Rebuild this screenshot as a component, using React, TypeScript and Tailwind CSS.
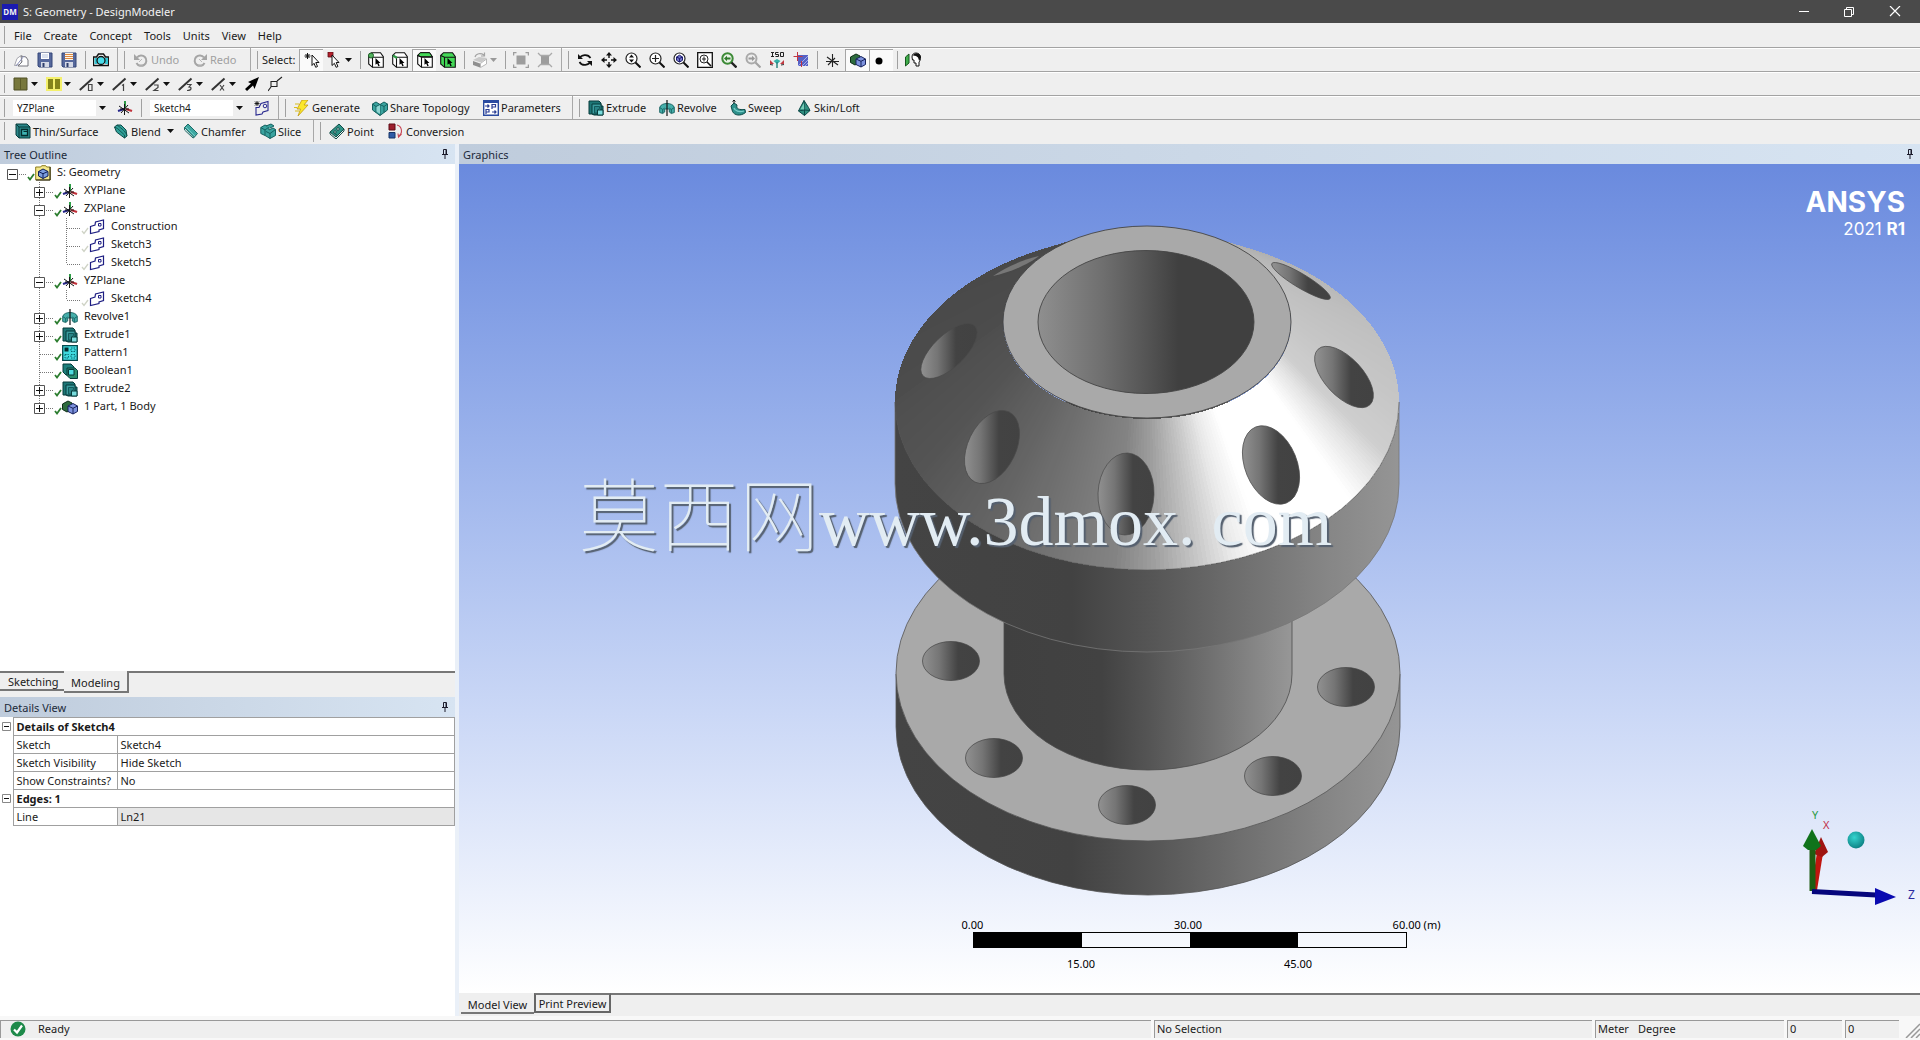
import React from "react";

type Kids = { children?: React.ReactNode };

/* ---------- icons ---------- */

function Ico({ children, size = 16 }: Kids & { size?: number }) {
  return (
    <svg width={size} height={size} viewBox="0 0 16 16" className="shrink-0" fill="none" aria-hidden="true">
      {children}
    </svg>
  );
}

const TEAL = "#3aa39f";
const DTEAL = "#14605f";

const icons: Record<string, React.ReactNode> = {
  sketchNew: (
    <Ico>
      <path d="M1.500 13.500l2.500-7 4-3 3 2-4 7z" fill="#fff" stroke="#a5a5ad" />
      <path d="M8 4l5 1 2 3v6H5l4-4z" fill="#fdfdfd" stroke="#77777f" />
      <path d="M3 14L11 4" stroke="#8a90b8" />
    </Ico>
  ),
  save: (
    <Ico>
      <path d="M1 1h14v14H2l-1-1z" fill="#56689c" stroke="#344679" />
      <path d="M4 1h8v6H4z" fill="#fff" />
      <path d="M4 10h8v5H4z" fill="#d5d9e6" />
      <path d="M5.500 11h2v4h-2z" fill="#2e3e6d" />
      <path d="M5 3h6M5 5h6" stroke="#b7c4df" />
    </Ico>
  ),
  saveAs: (
    <Ico>
      <path d="M1 1h14v14H2l-1-1z" fill="#56689c" stroke="#344679" />
      <path d="M4 1h8v7H4z" fill="#fff6e6" />
      <path d="M4 10h8v5H4z" fill="#d5d9e6" />
      <path d="M5.500 11h2v4h-2z" fill="#2e3e6d" />
      <path d="M4 2.500h8M4 4.500h8M4 6.500h8" stroke="#dc8740" />
    </Ico>
  ),
  camera: (
    <Ico>
      <path d="M.5 5h3l2-3h5l2 3h3v8.500H.5z" fill="#fff" stroke="#111" strokeWidth="1.400" />
      <path d="M1.500 6h3v6h-3zM12 6h3v6h-3z" fill="#34c5d4" />
      <circle cx="8" cy="8.500" r="4" fill="#4adbe8" stroke="#111" strokeWidth="1.300" />
    </Ico>
  ),
  undo: (
    <Ico>
      <path d="M4 5.500a5.200 5.200 0 1 1-.5 5.500" stroke="#a5a5a5" strokeWidth="2" />
      <path d="M1 2v6h6z" fill="#a5a5a5" />
      <path d="M6 13h4M6 10l3-3" stroke="#b9b9b9" />
    </Ico>
  ),
  redo: (
    <Ico>
      <path d="M12 5.500a5.200 5.200 0 1 0 .5 5.500" stroke="#a5a5a5" strokeWidth="2" />
      <path d="M15 2v6H9z" fill="#a5a5a5" />
      <path d="M6 13h4M10 10L7 7" stroke="#b9b9b9" />
    </Ico>
  ),
  newSel: (
    <Ico>
      <path d="M3.500 1v6M.5 4h6M1.500 2l4 4M5.500 2l-4 4" stroke="#111" />
      <path d="M8 3l7 7.500h-3.200l1.700 4-1.800.8-1.700-4L8 13.500z" fill="#fff" stroke="#111" />
    </Ico>
  ),
  selMode: (
    <Ico>
      <path d="M1 0h5v5H1z" fill="#b5202c" stroke="#5c0d14" strokeWidth=".8" />
      <path d="M5 3l7 7.500H9.200l1.700 4-1.800.8-1.700-4L5 13.500z" fill="#fff" stroke="#111" />
    </Ico>
  ),
  isoBox: (
    <Ico>
      <path d="M1 9l7 2.500v4L1 13z" fill="#8f8f8f" />
      <path d="M1 8l6-3 8 1-6 4.500z" fill="#c9c9c9" />
      <path d="M8.500 11.500l6-4.500v5l-6 3.500z" fill="#fff" stroke="#a7a7a7" strokeWidth=".8" />
      <path d="M3 5c1-4 6-4 9-2M12.500.5V4H9" stroke="#a3a3a3" strokeWidth="1.200" />
    </Ico>
  ),
  grayBox1: (
    <Ico>
      <path d="M3.500 3.500h9v9h-9z" fill="#9d9d9d" />
      <path d="M.5 3.500v-3h3M12.500.5h3v3M15.500 12.500v3h-3M3.500 15.500h-3v-3" stroke="#9d9d9d" strokeWidth="1.500" />
    </Ico>
  ),
  grayBox2: (
    <Ico>
      <path d="M4 4h8v8H4z" fill="#9d9d9d" />
      <path d="M1 1l3 3M15 1l-3 3M1 15l3-3M15 15l-3-3M4 3.500h8M4 12.500h8" stroke="#aaa" strokeWidth="1.300" />
    </Ico>
  ),
  rotate: (
    <Ico>
      <path d="M2.500 6.500C4 2.500 11 1.500 13.500 6M13.500 9.500C12 13.500 5 14.500 2.500 10" stroke="#111" strokeWidth="1.700" />
      <path d="M1 2v5h5zM15 14V9h-5z" fill="#111" />
    </Ico>
  ),
  pan: (
    <Ico>
      <path d="M8 2v4M8 10v4M2 8h4M10 8h4" stroke="#111" strokeWidth="1.400" />
      <path d="M8 0l3 3.500H5zM8 16l3-3.500H5zM0 8l3.500-3v6zM16 8l-3.500-3v6z" fill="#111" />
    </Ico>
  ),
  zoomUD: (
    <Ico>
      <circle cx="6.500" cy="6.500" r="5.500" fill="#fff" stroke="#222" strokeWidth="1.200" />
      <path d="M10.500 10.500l5 5" stroke="#111" strokeWidth="2" />
      <path d="M6.500 2.500l2.500 3H4zM6.500 10.500L9 7.500H4z" fill="#111" />
    </Ico>
  ),
  zoomPlus: (
    <Ico>
      <circle cx="6.500" cy="6.500" r="5.500" fill="#fff" stroke="#222" strokeWidth="1.200" />
      <path d="M10.500 10.500l5 5" stroke="#111" strokeWidth="2" />
      <path d="M6.500 3v7M3 6.500h7" stroke="#222" strokeWidth="1.200" />
    </Ico>
  ),
  zoomFit: (
    <Ico>
      <circle cx="6.500" cy="6.500" r="5.500" fill="#fff" stroke="#222" strokeWidth="1.200" />
      <path d="M10.500 10.500l5 5" stroke="#111" strokeWidth="2" />
      <path d="M3.500 5l3-1.800 3 1.800v3.300l-3 1.800-3-1.800z" fill="#7174c9" stroke="#1c1c70" />
      <path d="M3.500 5l3 1.500 3-1.500M6.500 6.500v3.600" stroke="#1c1c70" />
    </Ico>
  ),
  zoomWin: (
    <Ico>
      <path d="M.7.7h14.600v14.600H.7z" fill="#fff" stroke="#111" strokeWidth="1.300" />
      <circle cx="7" cy="7" r="4" stroke="#222" />
      <path d="M10 10l4 4" stroke="#111" strokeWidth="1.600" />
      <path d="M7 4.500v5M5 7h4" stroke="#222" />
    </Ico>
  ),
  zoomPrev: (
    <Ico>
      <circle cx="6.500" cy="6.500" r="5.200" fill="#e9f3e6" stroke="#3c8a36" strokeWidth="2" />
      <path d="M10.500 10.500l5 5" stroke="#222" strokeWidth="2.400" />
      <path d="M3 6.500L6 3.800v1.700h3.500v2H6v1.700z" fill="#2f7a2b" />
    </Ico>
  ),
  zoomNext: (
    <Ico>
      <circle cx="6.500" cy="6.500" r="5" fill="#ededed" stroke="#a9a9a9" strokeWidth="2" />
      <path d="M10.500 10.500l5 5" stroke="#a3a3a3" strokeWidth="2.200" />
      <path d="M10 6.500L7 3.800v1.700H3.500v2H7v1.700z" fill="#999" />
    </Ico>
  ),
  iso: (
    <Ico>
      <path d="M2 .5h3M3.500.5v4M2 4.500h3M9.500.5h-3v2h3v2h-3M11.500.5h3v4h-3z" stroke="#222" />
      <path d="M8 7l3.500 2-3.500 3-3.500-3z" fill="#35b0a8" />
      <path d="M8 10v6" stroke="#237f7a" strokeWidth="1.400" />
      <path d="M1 8l4 4H1zM15 8l-4 4h4z" fill="#c13b43" />
      <path d="M1 12.500l3 .5M15 12.500l-3 .5" stroke="#333" />
    </Ico>
  ),
  lookAt: (
    <Ico>
      <path d="M5 3h10v11H5z" fill="#5560c4" />
      <path d="M9 14l6-6M12 14l3-3M5 14L15 4" stroke="#a3aeea" />
      <path d="M4.500 0v9M.5 4.500h9M8.500 9v6" stroke="#c23540" />
    </Ico>
  ),
  triadBk: (
    <Ico>
      <path d="M7.500 2v13M2 5l11 8M1 9.500h13M3 13l7-7" stroke="#222" strokeWidth="1.100" />
    </Ico>
  ),
  bodies: (
    <Ico>
      <path d="M.5 5L6 2l4 2v6l-5 3-4.500-2.500z" fill="#2d6b3d" stroke="#0e2e17" />
      <path d="M6 7l5-2.500L15.500 7v5.500L11 15l-5-2.500z" fill="#7d92de" stroke="#17225c" />
      <path d="M6 7l5 2.300L15.500 7M11 9.300V15" stroke="#17225c" />
    </Ico>
  ),
  dot: (
    <Ico>
      <circle cx="5" cy="9" r="3.500" fill="#000" />
    </Ico>
  ),
  face: (
    <Ico>
      <path d="M.5 5L4 2v9L.5 14z" fill="#3fae4b" stroke="#17561e" />
      <path d="M7 5c0-3 2-4 4-4s4.500 1.500 4.500 4S15 9 14 10v4h-3v-3H9V8H7.500z" fill="#fff" stroke="#111" />
      <path d="M8 3.500c1-3 7-3 7.500 1 .2 2-.5 3.500-1.500 4l-1-3-2-1.500z" fill="#111" />
    </Ico>
  ),
  olive: (
    <Ico>
      <path d="M1 2h13v12H1z" fill="#77773c" stroke="#4f4f24" />
      <path d="M7.500 2v12" stroke="#5b5b28" />
    </Ico>
  ),
  yellow: (
    <Ico>
      <path d="M0 1h16v14H0z" fill="#f4f06c" />
      <path d="M2 3h5v10H2zM9 3h5v10H9z" fill="#84841a" />
    </Ico>
  ),
  fatArrow: (
    <Ico>
      <path d="M15 1L4 6l3 1.500L1 13l2 2 6-5.500L10.500 13z" fill="#000" />
    </Ico>
  ),
  node: (
    <Ico>
      <path d="M3 5.500h6v5H3zM9 5l5-4M3 11l-3 4" stroke="#222" strokeWidth="1.100" />
    </Ico>
  ),
  triad: (
    <Ico>
      <path d="M8 1v7" stroke="#2f9b47" strokeWidth="2" />
      <path d="M9 9l6 2" stroke="#c1303a" strokeWidth="2.200" />
      <path d="M7 9l-6 2" stroke="#25258a" strokeWidth="2" />
      <path d="M2 6l10 7M7.500 4v11M3 9h9M11 5l-7 8" stroke="#151515" />
    </Ico>
  ),
  newSketch: (
    <Ico>
      <path d="M3 1v5M.5 3.500h5M1 1.500l4 4M5 1.500l-4 4" stroke="#111" strokeWidth=".9" />
      <path d="M2 7.500h3l2-4 7-2v9l-5 1.500-1 2-6 1z" stroke="#28288f" strokeWidth="1.100" />
      <circle cx="11" cy="6" r="1.800" stroke="#28288f" />
    </Ico>
  ),
  bolt: (
    <Ico>
      <path d="M8 0h6l-4 5h4L4 16l2.500-7H3z" fill="#fbe72b" stroke="#c29b10" strokeWidth=".8" />
      <path d="M1 4h4M0 7.500h3M1 11h4" stroke="#d9bd1d" strokeWidth="1.200" />
    </Ico>
  ),
  share: (
    <Ico>
      <path d="M.5 4L4 2l4 2.500L12 2l3.500 2v6L8 15.500.5 10z" fill={TEAL} stroke={DTEAL} />
      <path d="M.5 4l3.500 2.500L8 4.500l4 2L15.500 4M4 6.500v6M12 6.500v6M8 4.500v11" stroke={DTEAL} />
      <path d="M4.500 7L8 5v9l-3.500-2.500z" fill="#8fd6d2" />
    </Ico>
  ),
  params: (
    <Ico>
      <path d="M.7.7h14.600v14.600H.7z" fill="#fff" stroke="#2a4aa0" strokeWidth="1.400" />
      <path d="M0 0h16v3H0z" fill="#2a4aa0" />
      <path d="M2 6h4M4.500 4.500L6 6 4.500 7.500M9 9V4.500h3.500V7H9M3 14V9.500h3V12H3M9 12h4M11.500 10.500L13 12l-1.500 1.500" stroke="#2a3d93" strokeWidth="1.200" />
    </Ico>
  ),
  extrude: (
    <Ico>
      <path d="M1 1h10l2 2v3h2v9H6l-2-1H1z" fill="#1d7676" stroke="#063b3b" />
      <path d="M4 4h9v10H4z" fill="#3a9c9e" stroke="#063b3b" />
      <path d="M6.500 6.500h5v2l-2 1.500v3h-3z" fill="#2a8587" stroke="#0b4d4e" strokeWidth=".8" />
      <path d="M9.500 10h5.500v5H9.500z" fill="#79dcdd" stroke="#063b3b" />
    </Ico>
  ),
  revolve: (
    <Ico>
      <path d="M.7 12.500V7.500C1.500 4.500 5 3.500 8 3.500s6.500 1 7.300 4v5l-3 1-2-1.500V9H5.700v3l-2 1.500z" fill="#46aeaa" stroke={DTEAL} strokeWidth=".9" />
      <path d="M3.700 13V9.500l2-1.500M12.300 13V9.500l-2-1.500M.7 7.500l3 2M15.300 7.500l-3 2" stroke={DTEAL} strokeWidth=".9" />
      <path d="M8 0v16" stroke="#111" strokeWidth="1.200" />
    </Ico>
  ),
  sweep: (
    <Ico>
      <path d="M1 6l3-3 3 2c-1 4 2 5 8 4.500l.5 3c-5 4-11 3-13-1z" fill="#2f918c" stroke="#0c4a48" />
      <path d="M4 8c1 3 5 4.500 10 3" stroke="#7bd0ca" strokeWidth="1.300" />
      <path d="M4 3V0M2.500 1.500L4 0l1.500 1.500" stroke="#111" />
    </Ico>
  ),
  loft: (
    <Ico>
      <path d="M8 .5l4.500 7 1.500 3L8.500 15.500 2.500 11l1.500-3z" fill="#2f8f80" stroke="#0c4a48" />
      <path d="M8 .5l.5 9.500-6 1M8.500 10l5.500.5M8.500 10v5.500" stroke="#0c4a48" />
      <path d="M8 3l.3 6.500L4.500 9z" fill="#74cdb9" />
    </Ico>
  ),
  thin: (
    <Ico>
      <path d="M1 1h11l3 3v11H4l-3-3z" fill="#2a8789" stroke="#063b3b" />
      <path d="M1 1l3 3h11M4 4v11" stroke="#063b3b" />
      <path d="M6.500 6.500h6v6h-6z" fill="#3fb4b4" stroke="#042d2d" strokeWidth="1.300" />
      <path d="M8.500 8.500h4v4" stroke="#042d2d" />
    </Ico>
  ),
  blend: (
    <Ico>
      <path d="M1.500 4L4 2h4l5 5 1 6-2.500 2-8-6z" fill="#2fa098" stroke="#0c4a48" />
      <path d="M1.500 4l3 1.500 7 6.500v3M4 2c2 1.500 8 5.500 10 10.500" stroke="#0c4a48" strokeWidth=".8" />
    </Ico>
  ),
  chamfer: (
    <Ico>
      <path d="M1.500 4.500L5 1l9.500 9.500-3.500 4z" fill="#3ea8a2" stroke="#1c6a66" />
      <path d="M1.500 4.500V7l8.500 8 1-.5" stroke="#1c6a66" />
      <path d="M3 4l9 9" stroke="#72cbc5" />
    </Ico>
  ),
  slice: (
    <Ico>
      <path d="M.8 4.500L5 2l4 2v3l4-2 2.500 1.500v6L10 15.500 6 13 .8 10.500z" fill={TEAL} stroke={DTEAL} />
      <path d="M.8 4.500L5 7l4-3M5 7v5M6 8.500l4 2 5.500-4M10 10.500v5" stroke={DTEAL} />
      <path d="M6 3l5-2 3 2-4 2" fill="#3aa39f" stroke={DTEAL} />
    </Ico>
  ),
  point: (
    <Ico>
      <path d="M1 9l9-8 5 5-8 8z" fill="#2f9488" stroke="#114c47" />
      <path d="M1 9v2l6 5 8-8V6M4.500 9.500l4 3" stroke="#114c47" />
      <circle cx="9" cy="6" r="1.300" fill="#e8f4f2" stroke="#114c47" />
      <circle cx="6" cy="9" r="1.200" fill="#e8f4f2" stroke="#114c47" />
    </Ico>
  ),
  conversion: (
    <Ico>
      <path d="M1 1h6v6H1z" fill="#9c1f2d" stroke="#5e0d17" />
      <path d="M1 9.500h6v5.500H1z" fill="#2f5ba6" stroke="#173467" />
      <path d="M9 2c5 1 6 8 2 11M13.500 11l-3 3-.5-3.500" stroke="#c74452" strokeWidth="1.100" />
    </Ico>
  ),
  project: (
    <Ico>
      <path d="M.7 2h5l1-1.300h4l1 1.300h3.600v13H.7z" fill="#f4e88a" stroke="#8a7b1a" />
      <path d="M3.500 6.500L8 4l5 2.500V11l-5 2.500L3.500 11z" fill="#7d9ede" stroke="#101f58" />
      <path d="M3.500 6.500L8 8.700l5-2.200M8 8.700v4.800" stroke="#101f58" />
      <path d="M15 2v13H1" stroke="#222" />
    </Ico>
  ),
  sketch: (
    <Ico>
      <path d="M1.500 7.500L6 6l.5-3 8-2v8.500L10 11v1.500l-8.500 2z" stroke="#1d1d82" strokeWidth="1.200" />
      <path d="M9.500 4.500h2.500v2.500H9.500z" stroke="#1d1d82" />
    </Ico>
  ),
  pattern: (
    <Ico>
      <path d="M.7.7h14.600v14.600H.7z" fill="#3fd9de" stroke="#06484c" strokeWidth="1.300" />
      <path d="M2.500 2.500h4v4h-4z" fill="#052c2e" />
      <path d="M9 3h4v3.500H9zM3 9.500h3.500v3.500H3zM9 9.500h4v3.500H9z" stroke="#0a6a70" strokeDasharray="1.500 1" />
    </Ico>
  ),
  boolean: (
    <Ico>
      <path d="M1 1h8l3 3v8H4l-3-3z" fill="#1d7f7b" stroke="#063b3b" />
      <path d="M5 5h8l2.500 2.500v8H8L5 12.500z" fill="#2a8f6f" stroke="#063b3b" />
      <path d="M6.500 6.500H12V12H6.500z" fill="#4fdde0" stroke="#063b3b" />
    </Ico>
  ),
};

function SelCube({ kind }: { kind: "pt" | "edge" | "face" | "body" }) {
  const green = "#43d957";
  return (
    <Ico>
      <path d="M.7 3.500L3.500.7h9l2.800 4V15.300H4.500L.7 12z" fill={kind === "body" ? green : "#fff"} stroke="#111" strokeWidth="1.100" />
      {kind === "face" && <path d="M.7 3.500L3.500.7h9l2.800 4H4z" fill={green} stroke="#111" />}
      <path d="M.7 3.500l3.800 1.800h10.800M4.500 5.300v10" stroke="#111" strokeWidth="1.100" />
      {kind === "pt" && <circle cx="3" cy="3.500" r="2.500" fill="#52b35e" stroke="#1c5e25" />}
      {kind === "edge" && <path d="M1 3.500L5 6" stroke="#2f9b47" strokeWidth="2.200" />}
      <path d="M7.500 6l5 5h-2l1.200 2.800-1.300.5-1.200-2.800-1.700 1.300z" fill="#000" />
    </Ico>
  );
}

function LineNum({ n }: { n: number }) {
  const marks = [
    "M9.500 8.500h3.500v6H9.500z",
    "M10 9.500l1.500-1v6.500",
    "M9 9h4v2.500L9 14.500h4.500",
    "M9 8.500h4l-2 2.500c3 0 3 3.500-2 3.500",
    "M9 9l4 5.500M13 9l-4 5.500",
  ];
  return (
    <Ico>
      <path d="M.8 14L13.500 2.500" stroke="#333" strokeWidth="2" />
      <path d={marks[n]} stroke="#444" strokeWidth="1.200" />
    </Ico>
  );
}

function Caret({ gray }: { gray?: boolean }) {
  return (
    <svg width="7" height="4" viewBox="0 0 7 4" className="shrink-0" aria-hidden="true">
      <path d="M0 0h7L3.500 4z" fill={gray ? "#999" : "#111"} />
    </svg>
  );
}

function Pin() {
  return (
    <button type="button" aria-label="Auto hide" className="flex h-5 w-4 items-center justify-center">
      <svg width="8" height="10" viewBox="0 0 8 10" fill="none" aria-hidden="true">
        <path d="M2.500.5h3v5h-3zM1 5.500h6M4 6v4M5 1v4" stroke="#1b1b2b" />
      </svg>
    </button>
  );
}

/* ---------- toolbar parts ---------- */

function Bar({ children }: Kids) {
  return <div className="flex h-6 items-center border-t border-[#a3a3a3] pl-px shadow-[inset_0_1px_0_#fff]">{children}</div>;
}

function Grip() {
  return (
    <div className="flex h-full w-2 shrink-0 items-center pl-[3px]">
      <div className="h-[18px] w-px bg-[#a0a0a0]" />
    </div>
  );
}

function Sep() {
  return (
    <div className="flex h-full w-2 shrink-0 items-center justify-center">
      <div className="h-[18px] w-px bg-[#a0a0a0]" />
    </div>
  );
}

function End() {
  return (
    <div className="flex h-full w-2 shrink-0 justify-center">
      <div className="h-full w-px bg-[#a8a8a8]" />
    </div>
  );
}

function Tool({ name, icon, caret, pressed, gray, wide }: { name: string; icon: React.ReactNode; caret?: boolean; pressed?: boolean; gray?: boolean; wide?: boolean }) {
  const w = wide ? "w-[33px]" : "w-6";
  const bg = pressed ? "border-l border-t border-[#a5a5a5] bg-[#fafafa]" : "";
  return (
    <button type="button" aria-label={name} className={`flex h-[22px] shrink-0 items-center justify-center gap-[2px] ${w} ${bg}`}>
      {icon}
      {caret && <Caret gray={gray} />}
    </button>
  );
}

function Cmd({ icon, label, w, caret, gray }: { icon: string; label: string; w: string; caret?: boolean; gray?: boolean }) {
  return (
    <button type="button" className={`flex h-[22px] shrink-0 items-center gap-[2px] pl-1 ${w} ${gray ? "text-[#a0a0a0]" : ""}`}>
      {icons[icon]}
      <span>{label}</span>
      {caret && (
        <span className="pl-1">
          <Caret />
        </span>
      )}
    </button>
  );
}

function Combo({ label, value }: { label: string; value: string }) {
  return (
    <div className="flex h-4 w-[97px] shrink-0 items-center">
      <select aria-label={label} defaultValue={value} className="h-4 w-[83px] appearance-none bg-white pl-1 text-[10px] leading-4 outline-none">
        <option>{value}</option>
      </select>
      <span className="pl-[3px]">
        <Caret />
      </span>
    </div>
  );
}

/* ---------- tree ---------- */

type Node = { label: string; level: number; icon: string; box?: "+" | "-"; last?: boolean; faint?: boolean };

const tree: Node[] = [
  { label: "S: Geometry", level: 0, icon: "project", box: "-" },
  { label: "XYPlane", level: 1, icon: "triad", box: "+" },
  { label: "ZXPlane", level: 1, icon: "triad", box: "-" },
  { label: "Construction", level: 2, icon: "sketch", faint: true },
  { label: "Sketch3", level: 2, icon: "sketch", faint: true },
  { label: "Sketch5", level: 2, icon: "sketch", faint: true, last: true },
  { label: "YZPlane", level: 1, icon: "triad", box: "-" },
  { label: "Sketch4", level: 2, icon: "sketch", faint: true, last: true },
  { label: "Revolve1", level: 1, icon: "revolve", box: "+" },
  { label: "Extrude1", level: 1, icon: "extrude", box: "+" },
  { label: "Pattern1", level: 1, icon: "pattern" },
  { label: "Boolean1", level: 1, icon: "boolean" },
  { label: "Extrude2", level: 1, icon: "extrude", box: "+" },
  { label: "1 Part, 1 Body", level: 1, icon: "bodies", box: "+", last: true },
];

function TreeRow({ n }: { n: Node }) {
  const drawLine = n.level > 0;
  return (
    <li className="flex h-[18px] items-center">
      {n.level > 0 && <span className="w-[27px] shrink-0" />}
      {n.level > 1 && (
        <svg width="27" height="18" className="shrink-0" aria-hidden="true">
          <path d="M12.500 0v18" stroke="#777" strokeDasharray="1 1" />
        </svg>
      )}
      <button type="button" aria-label={`Toggle ${n.label}`} className="shrink-0">
        <svg width="27" height="18" viewBox="0 0 27 18" fill="none" aria-hidden="true">
          {drawLine && <path d={n.last ? "M12.500 0v10" : "M12.500 0v18"} stroke="#777" strokeDasharray="1 1" />}
          <path d="M13 10.500h14" stroke="#777" strokeDasharray="1 1" />
          {n.box && <path d="M7.500 5.500h10v10h-10z" fill="#fff" stroke="#555" />}
          {n.box && <path d={n.box === "+" ? "M9 10.500h7M12.500 7v7" : "M9 10.500h7"} stroke="#111" />}
        </svg>
      </button>
      <svg width="8" height="18" viewBox="0 0 8 18" fill="none" className="shrink-0" aria-hidden="true">
        <path d="M1 13l2 2.500 4-5.500" stroke={n.faint ? "#cfd3c6" : "#2c7d2f"} strokeWidth={n.faint ? 1.3 : 1.8} />
      </svg>
      {icons[n.icon]}
      <span className="self-start pl-[6px] leading-4">{n.label}</span>
    </li>
  );
}

/* ---------- 3D model ---------- */

const stops: [number, number][] = [
  [-180, 76], [-120, 72], [-90, 110], [-70, 172], [-30, 190], [0, 198], [18, 206], [27, 232], [36, 255],
  [62, 255], [70, 234], [78, 200], [88, 160], [97, 132], [110, 118], [130, 100], [155, 84], [180, 78],
];

function shade(a: number) {
  for (let i = 1; i < stops.length; i++) {
    const [a1, v1] = stops[i];
    const [a0, v0] = stops[i - 1];
    if (a <= a1) return Math.round(v0 + ((v1 - v0) * (a - a0)) / (a1 - a0));
  }
  return 78;
}

const STEP = 1;
const facets = Array.from({ length: 360 }, (_, i) => {
  const deg = -180 + i * STEP;
  const p = (d: number, cx: number, cy: number, rx: number, ry: number) => {
    const t = (d * Math.PI) / 180;
    return `${(cx + rx * Math.cos(t)).toFixed(1)},${(cy + ry * Math.sin(t)).toFixed(1)}`;
  };
  const v = shade(deg + STEP / 2);
  const e = deg + STEP + 0.3;
  return {
    points: [p(deg, 1147, 323, 144, 96), p(e, 1147, 323, 144, 96), p(e, 1147, 402, 252, 168), p(deg, 1147, 402, 252, 168)].join(" "),
    fill: `rgb(${v},${v},${v})`,
  };
});

const coneHoles = [
  [949, 351, 36, 16, -44],
  [992, 447, 39, 24, -64],
  [1126, 494, 41, 28, -88],
  [1271, 465, 41, 26, 68],
  [1344, 377, 38, 19, 47],
  [1301, 281, 34, 7, 31],
];

const flangeHoles = [
  [951, 661],
  [994, 758],
  [1127, 805],
  [1273, 776],
  [1346, 687],
];

function Model() {
  return (
    <svg viewBox="459 164 1461 829" preserveAspectRatio="xMidYMid meet" className="absolute inset-0 h-full w-full" role="img" aria-label="Flanged fitting model">
      <defs>
        <linearGradient id="side">
          <stop offset="0" stopColor="#444" />
          <stop offset=".35" stopColor="#424242" />
          <stop offset=".52" stopColor="#575757" />
          <stop offset=".68" stopColor="#6e6e6e" />
          <stop offset=".85" stopColor="#858585" />
          <stop offset="1" stopColor="#959595" />
        </linearGradient>
        <linearGradient id="shaft">
          <stop offset="0" stopColor="#404040" />
          <stop offset=".34" stopColor="#424242" />
          <stop offset=".5" stopColor="#545454" />
          <stop offset=".7" stopColor="#6e6e6e" />
          <stop offset="1" stopColor="#979797" />
        </linearGradient>
        <linearGradient id="bore">
          <stop offset="0" stopColor="#8f8f8f" />
          <stop offset=".3" stopColor="#6f6f6f" />
          <stop offset=".52" stopColor="#525252" />
          <stop offset=".65" stopColor="#404040" />
          <stop offset="1" stopColor="#404040" />
        </linearGradient>
        <linearGradient id="hole" gradientUnits="userSpaceOnUse" x1="-29" x2="29" y1="0" y2="0">
          <stop offset="0" stopColor="#929292" />
          <stop offset=".3" stopColor="#757575" />
          <stop offset=".62" stopColor="#434343" />
          <stop offset="1" stopColor="#424242" />
        </linearGradient>
      </defs>

      <path d="M896 674v53a252 168 0 0 0 504 0v-53z" fill="url(#side)" stroke="#555" strokeWidth=".8" />
      <ellipse cx="1148" cy="673" rx="252" ry="168" fill="#a9a9a9" stroke="#555" strokeWidth=".8" />
      {flangeHoles.map(([x, y]) => (
        <g key={x} transform={`translate(${x} ${y})`}>
          <ellipse rx="28.500" ry="19.500" fill="url(#hole)" stroke="#444" strokeWidth=".7" />
        </g>
      ))}
      <path d="M1004 560v114a144 96 0 0 0 288 0v-114z" fill="url(#shaft)" stroke="#4c4c4c" strokeWidth=".8" />

      <path d="M895 402v82a252 168 0 0 0 504 0v-82z" fill="url(#side)" stroke="#777" strokeWidth=".8" />
      <g shapeRendering="crispEdges">
        {facets.map((f) => (
          <polygon key={f.points} points={f.points} fill={f.fill} />
        ))}
      </g>
      <path d="M895 402a252 168 0 0 0 504 0" stroke="#555" strokeWidth=".6" fill="none" />
      {coneHoles.map(([x, y, a, b, r]) => (
        <g key={x} transform={`translate(${x} ${y})`}>
          <clipPath id={`c${x}`}>
            <ellipse rx={a} ry={b} transform={`rotate(${r})`} />
          </clipPath>
          <rect x="-45" y="-45" width="90" height="90" fill="url(#hole)" clipPath={`url(#c${x})`} />
          <ellipse rx={a} ry={b} transform={`rotate(${r})`} fill="none" stroke="#4a4a4a" strokeWidth=".7" />
        </g>
      ))}
      <path d="M993 276c12-8 28-16 46-20-8 7-28 16-46 20z" fill="#777" />
      <ellipse cx="1147" cy="322" rx="144" ry="96" fill="#a9a9a9" stroke="#444" strokeWidth=".9" />
      <ellipse cx="1146" cy="322" rx="108" ry="71.500" fill="url(#bore)" stroke="#444" strokeWidth=".9" />
    </svg>
  );
}

function Triad() {
  return (
    <svg width="130" height="110" viewBox="0 0 130 110" className="absolute bottom-[81px] right-0" fill="none" role="img" aria-label="Axis triad">
      <defs>
        <radialGradient id="ball" cx=".4" cy=".35" r=".7">
          <stop offset="0" stopColor="#35d4cf" />
          <stop offset="1" stopColor="#0b7d80" />
        </radialGradient>
      </defs>
      <path d="M24 88l6-37" stroke="#c0150f" strokeWidth="6" />
      <path d="M31 35l7 15-6 5-8-3z" fill="#a01410" />
      <path d="M22.500 89V48" stroke="#1e5d12" strokeWidth="6" />
      <path d="M22 27l9 17-5 4h-8l-5-4z" fill="#10731b" />
      <path d="M22 89.500l64 3.500" stroke="#06067c" strokeWidth="5" />
      <path d="M85 86l21 9-21 8z" fill="#0a0ab0" />
      <circle cx="66" cy="38" r="8.500" fill="url(#ball)" />
      <text x="22" y="17" fontSize="11" fill="#2b9b45" fontFamily="Noto Sans">Y</text>
      <text x="33" y="27" fontSize="11" fill="#c0304a" fontFamily="Noto Sans">X</text>
      <text x="118" y="97" fontSize="12" fill="#2a2aa0" fontFamily="Noto Sans">Z</text>
    </svg>
  );
}

function Ruler() {
  return (
    <div className="absolute bottom-[22px] left-1/2 w-[434px] -translate-x-1/2 text-[11px] leading-[15px] text-black">
      <div className="flex justify-between">
        <span className="-ml-[11px]">0.00</span>
        <span>30.00</span>
        <span className="-mr-[34px]">60.00 (m)</span>
      </div>
      <div className="grid h-4 grid-cols-4 border border-black">
        <span className="bg-black" />
        <span />
        <span className="bg-black" />
        <span />
      </div>
      <div className="grid grid-cols-2 pt-2 text-center">
        <span>15.00</span>
        <span>45.00</span>
      </div>
    </div>
  );
}

/* ---------- details ---------- */

function MinusBox() {
  return (
    <button type="button" aria-label="Collapse group" className="mx-auto block">
      <svg width="9" height="9" viewBox="0 0 9 9" fill="none" aria-hidden="true">
        <path d="M.5.5h8v8h-8z" stroke="#888" />
        <path d="M2 4.500h5" stroke="#111" />
      </svg>
    </button>
  );
}

function Group({ title }: { title: string }) {
  return (
    <tr className="h-[18px]">
      <td className="p-0">
        <MinusBox />
      </td>
      <th colSpan={2} className="border border-[#a0a0a0] px-[3px] py-0 text-left font-bold">
        {title}
      </th>
    </tr>
  );
}

function Prop({ name, value, gray }: { name: string; value: string; gray?: boolean }) {
  return (
    <tr className="h-[18px]">
      <td className="p-0" />
      <th className="whitespace-nowrap border border-[#a0a0a0] px-[3px] py-0 text-left font-normal">{name}</th>
      <td className={`border border-[#a0a0a0] px-[3px] py-0 ${gray ? "bg-[#e6e6e6]" : ""}`}>{value}</td>
    </tr>
  );
}

function Header({ title }: { title: string }) {
  return (
    <div className="flex h-5 shrink-0 items-center justify-between bg-linear-to-r from-[#bfccdc] to-[#d7e4f2] pl-1 pr-[2px] text-[#1c2a3a]">
      <h2>{title}</h2>
      <Pin />
    </div>
  );
}

function Cell({ children, w }: Kids & { w: string }) {
  return <div className={`flex h-[18px] items-center border-l border-t border-[#999] bg-[#efefef] pb-[2px] pl-[2px] ${w}`}>{children}</div>;
}

/* ---------- page ---------- */

export default function App() {
  return (
    <div className="flex h-screen flex-col overflow-hidden bg-[#efefef] font-['Noto_Sans','Open_Sans',sans-serif] text-[11px] leading-[17px] text-[#1a1a1a]">
      <header className="flex h-[23px] shrink-0 items-center bg-[#4a4a4a] text-[#f2f2f2]">
        <span className="ml-[2px] flex h-4 w-4 items-center justify-center bg-[#1b1bb0] text-[8px] font-bold">DM</span>
        <h1 className="flex-1 pl-[5px]">S: Geometry - DesignModeler</h1>
        <div className="flex">
          <button type="button" aria-label="Minimize" className="flex w-[45px] justify-center">
            <svg width="12" height="12" fill="none" aria-hidden="true"><path d="M1 5.500h10" stroke="#fff" /></svg>
          </button>
          <button type="button" aria-label="Restore" className="flex w-[46px] justify-center">
            <svg width="12" height="12" fill="none" aria-hidden="true"><path d="M1.500 3.500h7v7h-7zM3.500 3.500v-2h7v7h-2" stroke="#fff" /></svg>
          </button>
          <button type="button" aria-label="Close" className="flex w-[46px] justify-center">
            <svg width="12" height="12" fill="none" aria-hidden="true"><path d="M1 0l10 10M11 0L1 10" stroke="#fff" strokeWidth="1.200" /></svg>
          </button>
          <span className="w-[2px]" />
        </div>
      </header>

      <nav className="flex h-6 shrink-0 items-center pl-px">
        <Grip />
        <div className="flex gap-3 pl-[5px]">
          {["File", "Create", "Concept", "Tools", "Units", "View", "Help"].map((m) => (
            <button key={m} type="button">{m}</button>
          ))}
        </div>
      </nav>

      <div className="shrink-0">
        <Bar>
          <Grip />
          <Tool name="New" icon={icons.sketchNew} />
          <Tool name="Save" icon={icons.save} />
          <Tool name="Save as" icon={icons.saveAs} />
          <Sep />
          <Tool name="Image capture" icon={icons.camera} />
          <End />
          <Grip />
          <Cmd icon="undo" label="Undo" w="w-[59px]" gray />
          <Cmd icon="redo" label="Redo" w="w-[58px]" gray />
          <End />
          <Grip />
          <span className="w-[37px] shrink-0">Select:</span>
          <Tool name="New selection" icon={icons.newSel} pressed />
          <Tool name="Select mode" icon={icons.selMode} caret wide />
          <Sep />
          <Tool name="Points" icon={<SelCube kind="pt" />} />
          <Tool name="Edges" icon={<SelCube kind="edge" />} />
          <Tool name="Faces" icon={<SelCube kind="face" />} pressed />
          <Tool name="Bodies" icon={<SelCube kind="body" />} />
          <Sep />
          <Tool name="Extend selection" icon={icons.isoBox} caret gray wide />
          <Sep />
          <Tool name="Box" icon={icons.grayBox1} />
          <Tool name="Expand" icon={icons.grayBox2} />
          <End />
          <Grip />
          <Tool name="Rotate" icon={icons.rotate} />
          <Tool name="Pan" icon={icons.pan} />
          <Tool name="Zoom" icon={icons.zoomUD} />
          <Tool name="Box zoom" icon={icons.zoomPlus} />
          <Tool name="Zoom to fit" icon={icons.zoomFit} />
          <Tool name="Magnifier" icon={icons.zoomWin} />
          <Tool name="Previous view" icon={icons.zoomPrev} />
          <Tool name="Next view" icon={icons.zoomNext} />
          <Tool name="Isometric" icon={icons.iso} />
          <Tool name="Look at" icon={icons.lookAt} />
          <Sep />
          <Tool name="Display plane" icon={icons.triadBk} />
          <Tool name="Display model" icon={icons.bodies} pressed />
          <Tool name="Display points" icon={icons.dot} pressed />
          <Sep />
          <Tool name="Look at face" icon={icons.face} />
        </Bar>

        <Bar>
          <Grip />
          <Tool name="Face color" icon={icons.olive} caret wide />
          <Tool name="Edge color" icon={icons.yellow} caret wide />
          {[0, 1, 2, 3, 4].map((n) => (
            <Tool key={n} name={`Edge joint ${n}`} icon={<LineNum n={n} />} caret wide />
          ))}
          <Tool name="Edge direction" icon={icons.fatArrow} />
          <Tool name="Vertices" icon={icons.node} />
        </Bar>

        <Bar>
          <Grip />
          <span className="w-1" />
          <Combo label="Plane" value="YZPlane" />
          <span className="w-[3px]" />
          <Tool name="New plane" icon={icons.triad} />
          <Sep />
          <span className="w-[5px]" />
          <Combo label="Sketch" value="Sketch4" />
          <span className="w-[3px]" />
          <Tool name="New sketch" icon={icons.newSketch} />
          <End />
          <Grip />
          <Cmd icon="bolt" label="Generate" w="w-[78px]" />
          <Cmd icon="share" label="Share Topology" w="w-[111px]" />
          <Cmd icon="params" label="Parameters" w="w-[89px]" />
          <End />
          <Grip />
          <Cmd icon="extrude" label="Extrude" w="w-[71px]" />
          <Cmd icon="revolve" label="Revolve" w="w-[71px]" />
          <Cmd icon="sweep" label="Sweep" w="w-[66px]" />
          <Cmd icon="loft" label="Skin/Loft" w="w-[80px]" />
        </Bar>

        <div className="flex h-[25px] items-center border-t border-[#a3a3a3] pb-[2px] pl-px">
          <Grip />
          <span className="w-[2px]" />
          <Cmd icon="thin" label="Thin/Surface" w="w-[98px]" />
          <Cmd icon="blend" label="Blend" w="w-[70px]" caret />
          <Cmd icon="chamfer" label="Chamfer" w="w-[77px]" />
          <Cmd icon="slice" label="Slice" w="w-[53px]" />
          <End />
          <Grip />
          <Cmd icon="point" label="Point" w="w-[59px]" />
          <Cmd icon="conversion" label="Conversion" w="w-[90px]" />
        </div>
      </div>

      <div className="flex min-h-0 flex-1">
        <aside className="flex w-[455px] shrink-0 flex-col">
          <Header title="Tree Outline" />
          <ul className="min-h-0 flex-1 bg-white">
            {tree.map((n) => (
              <TreeRow key={n.label} n={n} />
            ))}
          </ul>
          <div className="flex h-[26px] shrink-0 items-start">
            <button type="button" className="h-5 w-16 border-y-2 border-t-[#777] border-b-[#777] px-2 leading-[15px]">Sketching</button>
            <button type="button" className="h-[22px] w-[65px] border-b-2 border-r-2 border-[#777] px-[6px] pt-[3px] leading-[15px]">Modeling</button>
            <div className="flex-1 border-t-2 border-[#777]" />
          </div>
          <Header title="Details View" />
          <div className="h-[299px] shrink-0 bg-white">
            <table className="w-full table-fixed border-collapse leading-[17px]">
              <colgroup>
                <col className="w-[13px]" />
                <col className="w-[104px]" />
                <col />
              </colgroup>
              <tbody>
                <Group title="Details of Sketch4" />
                <Prop name="Sketch" value="Sketch4" />
                <Prop name="Sketch Visibility" value="Hide Sketch" />
                <Prop name="Show Constraints?" value="No" />
                <Group title="Edges: 1" />
                <Prop name="Line" value="Ln21" gray />
              </tbody>
            </table>
          </div>
        </aside>

        <div className="w-1 shrink-0 bg-[#eaf0f8]" />

        <main className="flex min-w-0 flex-1 flex-col">
          <Header title="Graphics" />
          <div className="relative min-h-0 flex-1 overflow-hidden bg-linear-to-b from-[#6a8ade] to-white">
            <Model />
            <p className="absolute left-[120px] top-[291px] whitespace-nowrap font-['Liberation_Serif','Noto_Sans_CJK_SC',serif] text-[70px] leading-[110px] text-[#e2ecf3] [text-shadow:2px_2px_1px_#55606f]">
              <span className="font-['Noto_Sans_CJK_SC',sans-serif] text-[80px] font-thin">莫西网</span>www.3dmox.<span className="pl-4">com</span>
            </p>
            <div className="absolute right-[15px] top-[21px] text-right font-['Inter',sans-serif] text-white">
              <div className="text-[28px] font-bold leading-[34px]">ANSYS</div>
              <div className="text-[17px] leading-5">
                2021 <b>R1</b>
              </div>
            </div>
            <Triad />
            <Ruler />
          </div>
          <div className="flex h-[23px] shrink-0 items-start pl-[2px]">
            <button type="button" className="h-[21px] w-[73px] border-b-2 border-[#777] pt-1 text-center leading-[15px]">Model View</button>
            <button type="button" className="h-5 w-[77px] whitespace-nowrap border-2 border-t-[#777] border-[#666] text-center leading-[15px]">Print Preview</button>
            <div className="flex-1 border-t-2 border-[#777]" />
          </div>
        </main>
      </div>

      <footer className="flex shrink-0 gap-[3px] border-b-2 border-t-4 border-[#f8f8f8] bg-[#f8f8f8]">
        <Cell w="flex-1">
          <svg width="16" height="16" viewBox="0 0 16 16" fill="none" className="ml-[7px]" aria-hidden="true">
            <circle cx="8" cy="8" r="7.500" fill="#1e8a4a" />
            <path d="M4 8.500l3 3 5-7" stroke="#fff" strokeWidth="2.200" />
          </svg>
          <span className="pl-3">Ready</span>
        </Cell>
        <Cell w="w-[438px]">No Selection</Cell>
        <Cell w="w-[189px]">
          <span>Meter</span>
          <span className="pl-[9px]">Degree</span>
        </Cell>
        <Cell w="w-[55px]">0</Cell>
        <Cell w="w-[54px]">0</Cell>
        <svg width="18" height="18" viewBox="0 0 18 18" fill="none" aria-hidden="true">
          <path d="M4 18L18 4M9 18l9-9M14 18l4-4" stroke="#999" strokeWidth="1.500" />
        </svg>
      </footer>
    </div>
  );
}
